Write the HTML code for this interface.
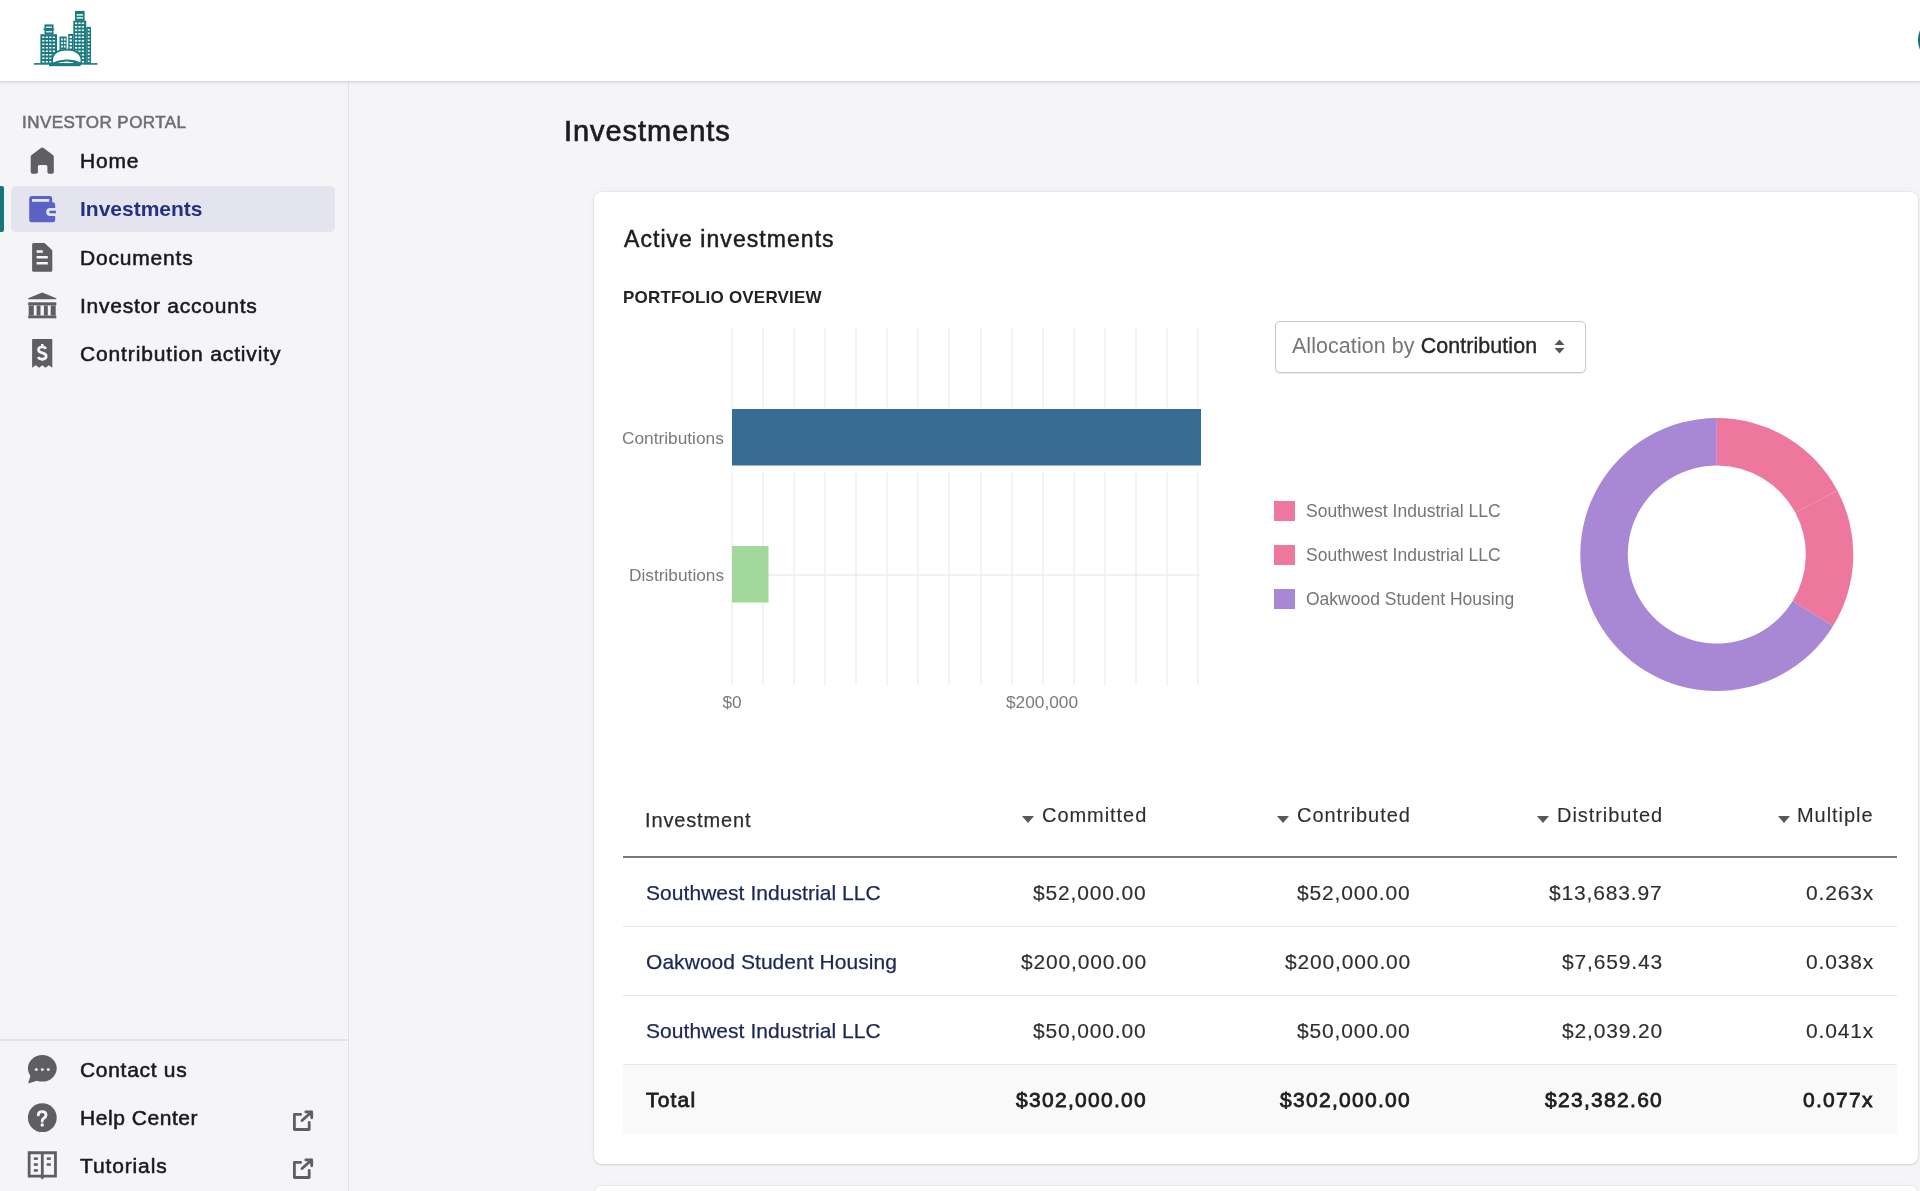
<!DOCTYPE html>
<html>
<head>
<meta charset="utf-8">
<style>
*{box-sizing:border-box;margin:0;padding:0}
html,body{width:1920px;height:1191px;overflow:hidden;background:#f5f5f7;font-family:"Liberation Sans",sans-serif}
.a{position:absolute}
.t{position:absolute;white-space:nowrap;line-height:1;will-change:transform}
#hdr{left:0;top:0;width:1920px;height:81px;background:#fff;box-shadow:0 1px 0 #d8d8db,0 2px 3px rgba(0,0,0,.09);z-index:5}
#side{left:0;top:81px;width:349px;height:1110px;background:#f5f5f7;border-right:1.5px solid #e3e3e6}
.nav{font-size:21px;color:#1a1a1c;letter-spacing:.9px;-webkit-text-stroke:.55px #1a1a1c}
.ico{position:absolute}
#card{left:593.5px;top:191.5px;width:1324.5px;height:972px;background:#fff;border-radius:8px;box-shadow:0 0 0 1px rgba(0,0,0,.03),0 1px 2px rgba(0,0,0,.1),0 0 7px rgba(0,0,0,.04)}
#card2{left:593.5px;top:1185.5px;width:1324.5px;height:400px;background:#fff;border-radius:8px;box-shadow:0 0 0 1px rgba(0,0,0,.03),0 1px 2px rgba(0,0,0,.1),0 0 7px rgba(0,0,0,.04)}
.ch{font-size:17.3px;color:#7a7a7a}
.lg{font-size:17.5px;color:#757575}
.th{font-size:20px;color:#2e2e30;letter-spacing:.95px;-webkit-text-stroke:.12px #2e2e30}
.td{font-size:21px;color:#2e2e30;letter-spacing:.85px;-webkit-text-stroke:.15px #2e2e30}
.nm{font-size:21px;color:#1b2857;letter-spacing:.05px;-webkit-text-stroke:.25px #1b2857}
.tot{font-size:21px;color:#1e1e20;font-weight:400;letter-spacing:1.3px;-webkit-text-stroke:.8px #1e1e20}
.arr{position:absolute;width:0;height:0;border-left:6px solid transparent;border-right:6px solid transparent;border-top:7px solid #58585c}
.rb{position:absolute;left:623px;width:1274px;height:1.5px;background:#e6e6e6}
</style>
</head>
<body>
<!-- header -->
<div id="hdr" class="a">
  <svg class="a" style="left:30px;top:5px" width="72" height="67" viewBox="0 0 72 67"><rect x="14.5" y="19.4" width="9" height="10" fill="#1b7b80"/><rect x="13.5" y="23.5" width="10.7" height="1.6" fill="#1b7b80"/><rect x="16" y="21.6" width="6" height="1.2" fill="#fff"/><rect x="16" y="26.2" width="6" height="1.2" fill="#fff"/><rect x="10.4" y="29.2" width="16.6" height="29.6" fill="#1b7b80"/><rect x="12.3" y="31.5" width="2.1" height="1.5" fill="#fff"/><rect x="15.8" y="31.5" width="2.1" height="1.5" fill="#fff"/><rect x="19.3" y="31.5" width="2.1" height="1.5" fill="#fff"/><rect x="22.8" y="31.5" width="2.1" height="1.5" fill="#fff"/><rect x="12.3" y="35" width="2.1" height="1.5" fill="#fff"/><rect x="15.8" y="35" width="2.1" height="1.5" fill="#fff"/><rect x="19.3" y="35" width="2.1" height="1.5" fill="#fff"/><rect x="22.8" y="35" width="2.1" height="1.5" fill="#fff"/><rect x="12.3" y="38.5" width="2.1" height="1.5" fill="#fff"/><rect x="15.8" y="38.5" width="2.1" height="1.5" fill="#fff"/><rect x="19.3" y="38.5" width="2.1" height="1.5" fill="#fff"/><rect x="22.8" y="38.5" width="2.1" height="1.5" fill="#fff"/><rect x="12.3" y="42" width="2.1" height="1.5" fill="#fff"/><rect x="15.8" y="42" width="2.1" height="1.5" fill="#fff"/><rect x="19.3" y="42" width="2.1" height="1.5" fill="#fff"/><rect x="22.8" y="42" width="2.1" height="1.5" fill="#fff"/><rect x="12.3" y="45.5" width="2.1" height="1.5" fill="#fff"/><rect x="15.8" y="45.5" width="2.1" height="1.5" fill="#fff"/><rect x="19.3" y="45.5" width="2.1" height="1.5" fill="#fff"/><rect x="22.8" y="45.5" width="2.1" height="1.5" fill="#fff"/><rect x="12.3" y="49" width="2.1" height="1.5" fill="#fff"/><rect x="15.8" y="49" width="2.1" height="1.5" fill="#fff"/><rect x="19.3" y="49" width="2.1" height="1.5" fill="#fff"/><rect x="22.8" y="49" width="2.1" height="1.5" fill="#fff"/><rect x="12.3" y="52.5" width="2.1" height="1.5" fill="#fff"/><rect x="15.8" y="52.5" width="2.1" height="1.5" fill="#fff"/><rect x="19.3" y="52.5" width="2.1" height="1.5" fill="#fff"/><rect x="22.8" y="52.5" width="2.1" height="1.5" fill="#fff"/><rect x="12.3" y="56" width="2.1" height="1.5" fill="#fff"/><rect x="15.8" y="56" width="2.1" height="1.5" fill="#fff"/><rect x="19.3" y="56" width="2.1" height="1.5" fill="#fff"/><rect x="22.8" y="56" width="2.1" height="1.5" fill="#fff"/><rect x="29.5" y="31.5" width="7.1" height="15" fill="#1b7b80"/><rect x="31.2" y="33.5" width="1.6" height="2" fill="#fff"/><rect x="33.9" y="33.5" width="1.6" height="2" fill="#fff"/><rect x="31.2" y="37" width="1.6" height="2" fill="#fff"/><rect x="33.9" y="37" width="1.6" height="2" fill="#fff"/><rect x="31.2" y="40.5" width="1.6" height="2" fill="#fff"/><rect x="33.9" y="40.5" width="1.6" height="2" fill="#fff"/><rect x="31.2" y="44" width="1.6" height="2" fill="#fff"/><rect x="33.9" y="44" width="1.6" height="2" fill="#fff"/><rect x="38.2" y="29" width="5.1" height="16" fill="#1b7b80"/><rect x="39.6" y="31" width="2.3" height="2" fill="#fff"/><rect x="39.6" y="34.5" width="2.3" height="2" fill="#fff"/><rect x="39.6" y="38" width="2.3" height="2" fill="#fff"/><rect x="39.6" y="41.5" width="2.3" height="2" fill="#fff"/><rect x="45" y="5.9" width="9.6" height="10" fill="#1b7b80"/><rect x="46.6" y="9.2" width="6.4" height="1.4" fill="#fff"/><rect x="46.6" y="12.2" width="6.4" height="1.4" fill="#fff"/><rect x="43.3" y="15.7" width="12.9" height="43.1" fill="#1b7b80"/><rect x="45" y="17.5" width="2.2" height="1.6" fill="#fff"/><rect x="48.4" y="17.5" width="2.2" height="1.6" fill="#fff"/><rect x="51.8" y="17.5" width="2.2" height="1.6" fill="#fff"/><rect x="45" y="21" width="2.2" height="1.6" fill="#fff"/><rect x="48.4" y="21" width="2.2" height="1.6" fill="#fff"/><rect x="51.8" y="21" width="2.2" height="1.6" fill="#fff"/><rect x="45" y="24.5" width="2.2" height="1.6" fill="#fff"/><rect x="48.4" y="24.5" width="2.2" height="1.6" fill="#fff"/><rect x="51.8" y="24.5" width="2.2" height="1.6" fill="#fff"/><rect x="45" y="28" width="2.2" height="1.6" fill="#fff"/><rect x="48.4" y="28" width="2.2" height="1.6" fill="#fff"/><rect x="51.8" y="28" width="2.2" height="1.6" fill="#fff"/><rect x="45" y="31.5" width="2.2" height="1.6" fill="#fff"/><rect x="48.4" y="31.5" width="2.2" height="1.6" fill="#fff"/><rect x="51.8" y="31.5" width="2.2" height="1.6" fill="#fff"/><rect x="45" y="35" width="2.2" height="1.6" fill="#fff"/><rect x="48.4" y="35" width="2.2" height="1.6" fill="#fff"/><rect x="51.8" y="35" width="2.2" height="1.6" fill="#fff"/><rect x="45" y="38.5" width="2.2" height="1.6" fill="#fff"/><rect x="48.4" y="38.5" width="2.2" height="1.6" fill="#fff"/><rect x="51.8" y="38.5" width="2.2" height="1.6" fill="#fff"/><rect x="45" y="42" width="2.2" height="1.6" fill="#fff"/><rect x="48.4" y="42" width="2.2" height="1.6" fill="#fff"/><rect x="51.8" y="42" width="2.2" height="1.6" fill="#fff"/><rect x="45" y="45.5" width="2.2" height="1.6" fill="#fff"/><rect x="48.4" y="45.5" width="2.2" height="1.6" fill="#fff"/><rect x="51.8" y="45.5" width="2.2" height="1.6" fill="#fff"/><rect x="45" y="49" width="2.2" height="1.6" fill="#fff"/><rect x="48.4" y="49" width="2.2" height="1.6" fill="#fff"/><rect x="51.8" y="49" width="2.2" height="1.6" fill="#fff"/><rect x="45" y="52.5" width="2.2" height="1.6" fill="#fff"/><rect x="48.4" y="52.5" width="2.2" height="1.6" fill="#fff"/><rect x="51.8" y="52.5" width="2.2" height="1.6" fill="#fff"/><rect x="45" y="56" width="2.2" height="1.6" fill="#fff"/><rect x="48.4" y="56" width="2.2" height="1.6" fill="#fff"/><rect x="51.8" y="56" width="2.2" height="1.6" fill="#fff"/><rect x="56.2" y="21.9" width="4.8" height="36.9" fill="#1b7b80"/><rect x="57.8" y="24" width="1.8" height="1.6" fill="#fff"/><rect x="57.8" y="27.5" width="1.8" height="1.6" fill="#fff"/><rect x="57.8" y="31" width="1.8" height="1.6" fill="#fff"/><rect x="57.8" y="34.5" width="1.8" height="1.6" fill="#fff"/><rect x="57.8" y="38" width="1.8" height="1.6" fill="#fff"/><rect x="57.8" y="41.5" width="1.8" height="1.6" fill="#fff"/><rect x="57.8" y="45" width="1.8" height="1.6" fill="#fff"/><rect x="57.8" y="48.5" width="1.8" height="1.6" fill="#fff"/><rect x="57.8" y="52" width="1.8" height="1.6" fill="#fff"/><rect x="57.8" y="55.5" width="1.8" height="1.6" fill="#fff"/><rect x="3.9" y="58.1" width="63.6" height="1.6" fill="#1b7b80"/><path d="M22.6 58.4 C20.5 50 26.5 44.6 36.6 44.6 C46.5 44.6 52.8 49.5 51.2 58.4 C47 56.4 41.5 55 36.2 55.3 C31 55.5 26 56.8 22.6 58.4Z" fill="#fff" stroke="#1b7b80" stroke-width="1.6"/><rect x="19" y="58.6" width="31.6" height="2.6" fill="#1b7b80"/><path d="M26 58 Q36 53.8 47 58" fill="none" stroke="#1b7b80" stroke-width="1.3"/></svg>
  <div class="a" style="left:1918px;top:16px;width:48px;height:48px;border-radius:50%;background:#136c7a"></div>
</div>

<!-- sidebar -->
<div id="side" class="a"></div>
<div class="t" style="left:22px;top:113.8px;font-size:17px;color:#6e6e72;letter-spacing:.45px;-webkit-text-stroke:.55px #6e6e72">INVESTOR PORTAL</div>

<!-- active highlight -->
<div class="a" style="left:11px;top:186px;width:324px;height:46px;background:#e4e4ef;border-radius:5px"></div>
<div class="a" style="left:0;top:186px;width:3.5px;height:46px;background:#17767c;border-radius:0 2px 2px 0"></div>

<!-- nav icons -->
<svg class="a" style="left:0;top:0" width="348" height="1191" viewBox="0 0 348 1191">
  <path d="M42.25 147.6 Q43.1 147.6 43.9 148.2 L52.9 155 Q53.8 155.7 53.8 157 V172 Q53.8 173.7 52.1 173.7 H49.1 Q47.4 173.7 47.4 172 V166.5 Q47.4 165 45.9 165 H39.4 Q37.9 165 37.9 166.5 V172 Q37.9 173.7 36.2 173.7 H32.4 Q30.7 173.7 30.7 172 V157 Q30.7 155.7 31.6 155 L40.6 148.2 Q41.4 147.6 42.25 147.6Z" fill="#5f5f63"/>
  <path d="M32 196.1 H49.7 Q52.2 196.1 52.2 198.6 V202.2 H52.7 Q55.2 202.2 55.2 204.7 V219.7 Q55.2 222.2 52.7 222.2 H31.7 Q29.2 222.2 29.2 219.7 V199 Q29.2 196.1 32 196.1Z" fill="#5a62c5"/>
  <rect x="32" y="199" width="17.2" height="2.8" fill="#e4e4ef"/>
  <path d="M56 208 H50.2 Q46.2 208 46.2 212 Q46.2 216 50.2 216 H56Z" fill="#e4e4ef"/>
  <path d="M56 210.7 H50.5 Q49.2 210.7 49.2 212 Q49.2 213.3 50.5 213.3 H56Z" fill="#5a62c5"/>
  <path d="M33.6 243 H44.5 L52.3 250.3 V270.2 Q52.3 271.7 50.8 271.7 H33.6 Q32.1 271.7 32.1 270.2 V244.5 Q32.1 243 33.6 243Z" fill="#5f5f63"/>
  <rect x="36.6" y="250.3" width="6.2" height="2.5" fill="#f5f5f7"/>
  <rect x="36.6" y="256" width="11.2" height="2.5" fill="#f5f5f7"/>
  <rect x="36.6" y="262" width="11.2" height="2.5" fill="#f5f5f7"/>
  <path d="M42.25 292.5 L56.3 298.2 V299.2 H28.2 V298.2Z" fill="#5f5f63"/>
  <rect x="28.2" y="302.3" width="28.1" height="3.1" fill="#5f5f63"/>
  <path d="M28.7 305.4 H55.7 V315.5 H28.7Z M33.8 305.4 V315.5 H36.6 V305.4Z M40.5 305.4 V315.5 H43.9 V305.4Z M47.8 305.4 V315.5 H50.7 V305.4Z" fill="#5f5f63" fill-rule="evenodd"/>
  <rect x="28.2" y="315.5" width="28.1" height="2.8" fill="#5f5f63"/>
  <path d="M32.1 339.5 Q32.1 339 32.6 339 H51.8 Q52.3 339 52.3 339.5 V367.8 L48.9 365.3 L45.5 367.8 L42.3 365.3 L39.2 367.8 L35.7 365.3 L32.1 367.8Z" fill="#5f5f63"/>
  <path d="M46 348.8 C45.3 347.6 44 347 42.3 347 C40 347 38.5 348.2 38.5 349.8 C38.5 351.6 40 352.3 42.2 352.9 C44.6 353.5 46.2 354.4 46.2 356.3 C46.2 358 44.5 359.1 42.3 359.1 C40.3 359.1 38.8 358.4 38.1 357.1" fill="none" stroke="#f5f5f7" stroke-width="2.7"/>
  <path d="M42.3 344.1 V347.5 M42.3 358.6 V360.6" fill="none" stroke="#f5f5f7" stroke-width="2.6"/>
  <ellipse cx="42.3" cy="1068.3" rx="14.4" ry="13.3" fill="#5f5f63"/>
  <path d="M31 1074 L28.3 1082.8 Q28.2 1083.5 29 1083.2 L38.5 1080.2Z" fill="#5f5f63"/>
  <circle cx="36.3" cy="1069.6" r="1.45" fill="#f5f5f7"/><circle cx="42.3" cy="1069.6" r="1.45" fill="#f5f5f7"/><circle cx="48.3" cy="1069.6" r="1.45" fill="#f5f5f7"/>
  <circle cx="42.3" cy="1117.7" r="14.4" fill="#5f5f63"/>
  <path d="M38.3 1115 C38.3 1112.6 40 1111.6 42.2 1111.6 C44.6 1111.6 46 1113 46 1115 C46 1116.9 44.7 1117.7 43.5 1118.4 C42.5 1119 42.2 1119.7 42.2 1121.3" fill="none" stroke="#f5f5f7" stroke-width="2.9" stroke-linecap="round"/>
  <circle cx="42.2" cy="1125.1" r="1.75" fill="#f5f5f7"/>
  <path d="M29.15 1152.75 H55.45 V1176.15 H29.15Z M42.3 1152.75 V1176.15" fill="none" stroke="#5f5f63" stroke-width="2.8"/>
  <path d="M40.3 1177 H44.3 L42.3 1179.8Z" fill="#5f5f63"/>
  <rect x="33.8" y="1157.4" width="4.1" height="2.5" fill="#5f5f63"/><rect x="33.8" y="1163.3" width="4.1" height="2.5" fill="#5f5f63"/><rect x="33.8" y="1169.2" width="4.1" height="2.5" fill="#5f5f63"/>
  <rect x="46.7" y="1157.4" width="4.1" height="2.5" fill="#5f5f63"/><rect x="46.7" y="1163.3" width="4.1" height="2.5" fill="#5f5f63"/>
  <g fill="none" stroke="#5f5f63" stroke-width="2.8" stroke-linecap="round" stroke-linejoin="round">
    <path d="M300.7 1114.4 H294.4 V1129.5 H309.2 V1122.5 M302 1120.5 L311.7 1111.9 M305.8 1111.9 H311.7 V1117.8"/>
    <path d="M300.7 1162.4 H294.4 V1177.5 H309.2 V1170.5 M302 1168.5 L311.7 1159.9 M305.8 1159.9 H311.7 V1165.8"/>
  </g>
</svg>
<!-- nav labels -->
<div class="t nav" style="left:80px;top:150.4px;letter-spacing:0.8px">Home</div>
<div class="t nav" style="left:80px;top:198.4px;color:#24317f;font-weight:700;letter-spacing:0;-webkit-text-stroke:0">Investments</div>
<div class="t nav" style="left:80px;top:246.9px;letter-spacing:0.82px">Documents</div>
<div class="t nav" style="left:80px;top:295px;letter-spacing:0.76px">Investor accounts</div>
<div class="t nav" style="left:80px;top:343.2px;letter-spacing:0.86px">Contribution activity</div>

<!-- sidebar bottom -->
<div class="a" style="left:0;top:1039px;width:348px;height:1.5px;background:#e2e2e5"></div>
<div class="t nav" style="left:80px;top:1059.1px;letter-spacing:0.7px">Contact us</div>
<div class="t nav" style="left:80px;top:1106.9px;letter-spacing:0.55px">Help Center</div>
<div class="t nav" style="left:80px;top:1154.8px;letter-spacing:0.87px">Tutorials</div>
<!-- main -->
<div class="t" style="left:563.5px;top:117.4px;font-size:29px;color:#1d1d1f;letter-spacing:.95px;-webkit-text-stroke:.7px #1d1d1f">Investments</div>

<div id="card" class="a"></div>
<div id="card2" class="a"></div>

<div class="t" style="left:623.5px;top:228px;font-size:23px;color:#1d1d1f;letter-spacing:1.05px;-webkit-text-stroke:.5px #1d1d1f">Active investments</div>
<div class="t" style="left:622.5px;top:288.8px;font-size:17px;font-weight:700;color:#222;letter-spacing:.2px">PORTFOLIO OVERVIEW</div>

<!-- bar chart -->
<svg class="a" style="left:600px;top:320px" width="620" height="400" viewBox="0 0 620 400">
  <g stroke="#ededed" stroke-width="1.3">
    <path d="M132 8V365M163 8V365M194 8V365M225 8V365M256 8V365M287 8V365M318 8V365M349 8V365M381 8V365M412 8V365M443 8V365M474 8V365M505 8V365M536 8V365M567 8V365M598 8V365"/>
    <path d="M132 255H600"/>
  </g>
  <rect x="128" y="87.5" width="476" height="64" fill="#fff"/><rect x="132" y="89" width="469" height="56.5" fill="#376c93"/>
  <rect x="132" y="226" width="36.5" height="56.5" fill="#a3d89c"/>
</svg>
<div class="t ch" style="right:1196px;top:429.5px">Contributions</div>
<div class="t ch" style="right:1196px;top:567.1px">Distributions</div>
<div class="t ch" style="left:712px;width:40px;text-align:center;top:693.7px">$0</div>
<div class="t ch" style="left:992px;width:100px;text-align:center;top:693.7px">$200,000</div>

<!-- dropdown -->
<div class="a" style="left:1274.5px;top:320.5px;width:311px;height:52px;border:1.5px solid #c9c9cc;border-radius:5px;background:#fff;box-shadow:0 1px 1.5px rgba(0,0,0,.08)"></div>
<div class="t" style="left:1292px;top:336px;font-size:21.4px;color:#75757a;letter-spacing:.1px"><span>Allocation by </span><span style="color:#262628;-webkit-text-stroke:.35px #262628">Contribution</span></div>
<svg class="ico" style="left:1554px;top:339px" width="11" height="15" viewBox="0 0 11 15">
  <path d="M5.5 0.5 L10.5 6 H0.5Z M0.5 9 H10.5 L5.5 14.5Z" fill="#555"/>
</svg>

<!-- legend -->
<div class="a" style="left:1274px;top:501px;width:21px;height:20px;background:#ee789d"></div>
<div class="a" style="left:1274px;top:544.5px;width:21px;height:20px;background:#ee789d"></div>
<div class="a" style="left:1274px;top:588.5px;width:21px;height:20px;background:#a887d4"></div>
<div class="t lg" style="left:1306px;top:503.2px">Southwest Industrial LLC</div>
<div class="t lg" style="left:1306px;top:546.8px">Southwest Industrial LLC</div>
<div class="t lg" style="left:1306px;top:590.5px">Oakwood Student Housing</div>

<!-- donut -->
<svg class="a" style="left:1576px;top:414px" width="282" height="282" viewBox="0 0 282 282" id="donut"><path d="M140.80 4.00 A136.5 136.5 0 0 1 261.31 76.39 L219.37 98.70 A89.0 89.0 0 0 0 140.80 51.50 Z" fill="#ee789d"/><path d="M261.31 76.39 A136.5 136.5 0 0 1 257.07 212.00 L216.61 187.12 A89.0 89.0 0 0 0 219.37 98.70 Z" fill="#ee789d"/><path d="M257.07 212.00 A136.5 136.5 0 1 1 140.80 4.00 L140.80 51.50 A89.0 89.0 0 1 0 216.61 187.12 Z" fill="#a887d4"/></svg>

<!-- table -->
<div class="t" style="left:644.5px;top:809.7px;font-size:20px;color:#2e2e30;letter-spacing:.85px;-webkit-text-stroke:.25px #2e2e30">Investment</div>
<div class="arr" style="left:1022px;top:816px"></div>
<div class="arr" style="left:1277px;top:816px"></div>
<div class="arr" style="left:1537px;top:816px"></div>
<div class="arr" style="left:1778px;top:816px"></div>
<div class="t th" style="right:773px;top:805.4px">Committed</div>
<div class="t th" style="right:509px;top:805.4px">Contributed</div>
<div class="t th" style="right:257px;top:805.4px">Distributed</div>
<div class="t th" style="right:46px;top:805.4px">Multiple</div>
<div class="a" style="left:623px;top:856px;width:1274px;height:2px;background:#7a7a7d"></div>

<div class="rb" style="top:925.5px"></div>
<div class="rb" style="top:994.5px"></div>
<div class="rb" style="top:1063.5px"></div>
<div class="a" style="left:623px;top:1065px;width:1274px;height:69px;background:#f9f9f9"></div>

<div class="t nm" style="left:645.5px;top:882.1px">Southwest Industrial LLC</div>
<div class="t nm" style="left:645.5px;top:951.2px">Oakwood Student Housing</div>
<div class="t nm" style="left:645.5px;top:1020.4px">Southwest Industrial LLC</div>
<div class="t tot" style="left:645.5px;top:1089px;letter-spacing:1.2px">Total</div>

<div class="t td" style="right:773px;top:882.1px">$52,000.00</div>
<div class="t td" style="right:509px;top:882.1px">$52,000.00</div>
<div class="t td" style="right:257px;top:882.1px">$13,683.97</div>
<div class="t td" style="right:46px;top:882.1px">0.263x</div>

<div class="t td" style="right:773px;top:951.2px">$200,000.00</div>
<div class="t td" style="right:509px;top:951.2px">$200,000.00</div>
<div class="t td" style="right:257px;top:951.2px">$7,659.43</div>
<div class="t td" style="right:46px;top:951.2px">0.038x</div>

<div class="t td" style="right:773px;top:1020.4px">$50,000.00</div>
<div class="t td" style="right:509px;top:1020.4px">$50,000.00</div>
<div class="t td" style="right:257px;top:1020.4px">$2,039.20</div>
<div class="t td" style="right:46px;top:1020.4px">0.041x</div>

<div class="t tot" style="right:773px;top:1089px">$302,000.00</div>
<div class="t tot" style="right:509px;top:1089px">$302,000.00</div>
<div class="t tot" style="right:257px;top:1089px">$23,382.60</div>
<div class="t tot" style="right:46px;top:1089px">0.077x</div>
</body>
</html>
